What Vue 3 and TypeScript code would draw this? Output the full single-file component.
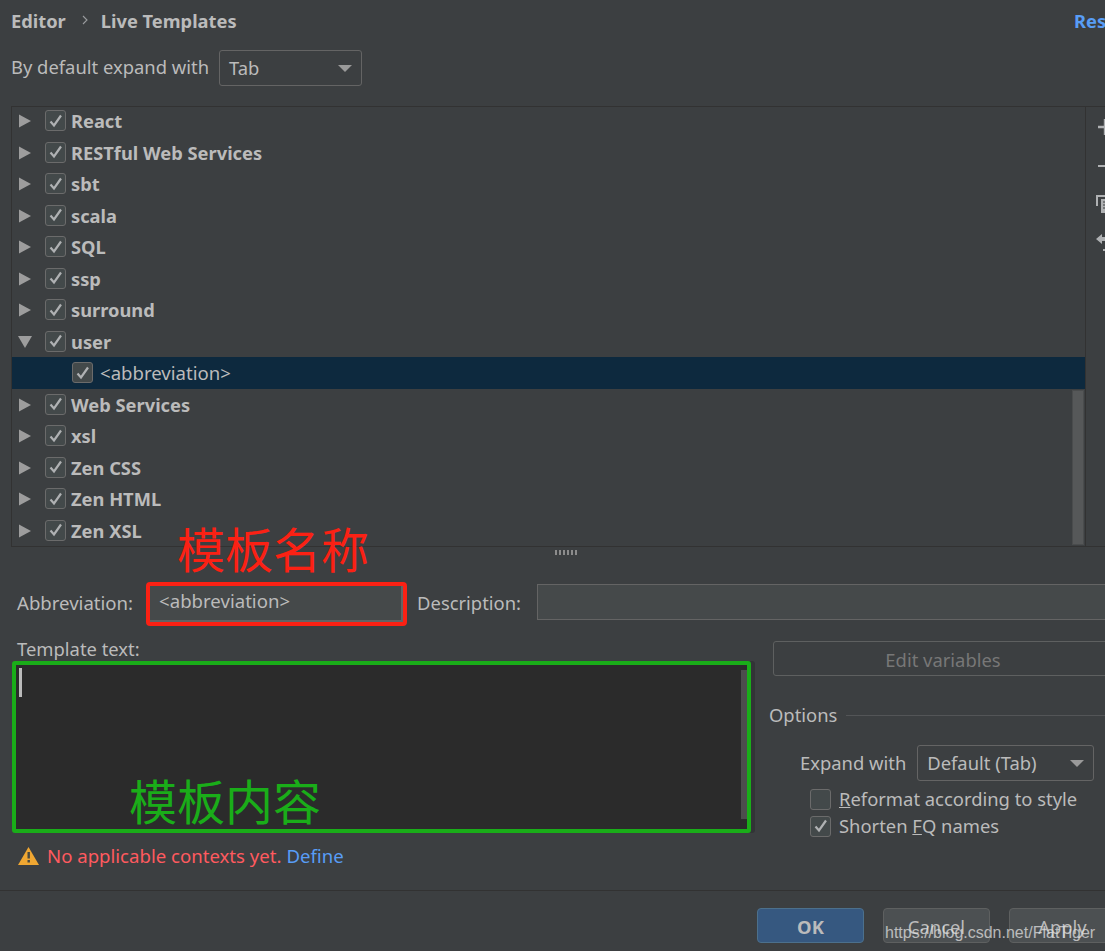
<template>
  <div class="page">
    <!-- Breadcrumb -->
    <div class="crumbs">
      <span>Editor</span>
      <svg class="crumb-arrow" width="8" height="12" viewBox="0 0 8 12"><path d="M2 2l4 4-4 4" fill="none" stroke="#9a9c9e" stroke-width="1.1"/></svg>
      <span>Live Templates</span>
      <a class="reset">Reset</a>
    </div>

    <div class="expand-row">
      <span class="expand-label">By default expand with</span>
      <div class="combo combo-tab"><span>Tab</span><i class="caret"></i></div>
    </div>

    <!-- Template groups -->
    <div class="tree-panel">
      <div class="tree">
        <div v-for="row in rows" :key="row.label" class="tree-row" :class="{ selected: row.child, bold: !row.child }">
          <svg v-if="!row.child && !row.open" class="arrow" width="14" height="16" viewBox="0 0 14 16"><path d="M1 1.5l12 6.5-12 6.5z" fill="#9d9d9d"/></svg>
          <svg v-else-if="row.open" class="arrow" width="14" height="16" viewBox="0 0 14 16"><path d="M0 2h14l-7 12z" fill="#9d9d9d"/></svg>
          <span class="check" :class="{ nested: row.child }">
            <svg width="14" height="14" viewBox="0 0 14 14"><path d="M1.5 7.5l3.5 4 7-10" fill="none" stroke="#afb1b3" stroke-width="2.2"/></svg>
          </span>
          <span class="tree-label">{{ row.label }}</span>
        </div>
        <div class="scroll-thumb"></div>
      </div>
      <div class="toolbar">
        <svg width="20" height="20" viewBox="0 0 20 20"><path d="M2 10h16M9 2v16" stroke="#afb1b3" stroke-width="2.4"/></svg>
        <svg width="20" height="20" viewBox="0 0 20 20"><path d="M2 10h16" stroke="#afb1b3" stroke-width="2"/></svg>
        <svg width="20" height="20" viewBox="0 0 20 20"><path d="M1 12V2h12" fill="none" stroke="#afb1b3" stroke-width="2"/><path d="M5 5h14v14H5z" fill="#afb1b3"/><path d="M7 8h10M7 11h10M7 14h10" stroke="#3c3f41"/></svg>
        <svg width="20" height="20" viewBox="0 0 20 20"><path d="M0 6l6-5v3h12v4H6v3z" fill="#afb1b3"/><path d="M7 17h11" stroke="#afb1b3" stroke-width="2"/></svg>
      </div>
    </div>

    <div class="splitter"><span class="grip"></span></div>

    <div class="fields-row">
      <label class="field-label abbr-label">Abbreviation:</label>
      <div class="abbr-frame"><div class="abbr-input">&lt;abbreviation&gt;</div></div>
      <label class="field-label desc-label">Description:</label>
      <div class="desc-input"></div>
    </div>

    <div class="editor-row">
      <div class="editor-col">
        <div class="template-label">Template text:</div>
        <div class="template-box">
          <i class="cursor"></i>
          <i class="editor-scroll"></i>
        </div>
      </div>
      <div class="side-col">
        <div class="edit-vars">Edit variables</div>
        <div class="options-title"><span>Options</span><i></i></div>
        <div class="expand-with">
          <span>Expand with</span>
          <div class="combo combo-default"><span>Default (Tab)</span><i class="caret"></i></div>
        </div>
        <div class="option">
          <span class="check"></span>
          <span><u>R</u>eformat according to style</span>
        </div>
        <div class="option">
          <span class="check">
            <svg width="14" height="14" viewBox="0 0 14 14"><path d="M1.5 7.5l3.5 4 7-10" fill="none" stroke="#afb1b3" stroke-width="2.2"/></svg>
          </span>
          <span>Shorten <u>F</u>Q names</span>
        </div>
      </div>
    </div>

    <div class="warning-row">
      <svg width="21" height="18" viewBox="0 0 21 18"><path d="M10.5 0L21 18H0z" fill="#f0a732"/><path d="M9.5 5h2.4v6.5H9.5zM9.5 13h2.4v2.5H9.5z" fill="#4a4a40"/></svg>
      <span class="warn-text">No applicable contexts yet.</span>
      <a class="define">Define</a>
    </div>

    <div class="footer">
      <div class="btn primary">OK</div>
      <div class="btn">Cancel</div>
      <div class="btn">Apply</div>
    </div>

    <!-- Annotations and watermark drawn over the dialog -->
    <div class="note note-red">模板名称</div>
    <div class="note note-green">模板内容</div>
    <div class="watermark">https://blog.csdn.net/FlatTiger</div>
  </div>
</template>

<script setup lang="ts">
interface TreeRow {
  label: string;
  open?: boolean;
  child?: boolean;
}

const rows: TreeRow[] = [
  { label: 'React' },
  { label: 'RESTful Web Services' },
  { label: 'sbt' },
  { label: 'scala' },
  { label: 'SQL' },
  { label: 'ssp' },
  { label: 'surround' },
  { label: 'user', open: true },
  { label: '<abbreviation>', child: true },
  { label: 'Web Services' },
  { label: 'xsl' },
  { label: 'Zen CSS' },
  { label: 'Zen HTML' },
  { label: 'Zen XSL' },
];
</script>

<style>
html, body { margin: 0; background: #3c3f41; }
</style>

<style scoped>
.page {
  position: relative;
  width: 1105px;
  height: 951px;
  overflow: hidden;
  display: flex;
  flex-direction: column;
  background: #3c3f41;
  color: #bbbbbb;
  font-family: "Noto Sans", "Noto Sans CJK SC", sans-serif;
  font-size: 18.4px;
}

.crumbs {
  height: 40px;
  flex: none;
  display: flex;
  align-items: center;
  padding: 0 0 2px 11px;
  box-sizing: content-box;
  font-size: 18.3px;
  font-weight: 700;
  white-space: nowrap;
}
.crumb-arrow { margin: 0 12px 0 15px; }
.reset { margin-left: auto; margin-right: -20px; color: #589df6; }

.expand-row {
  height: 64px;
  flex: none;
  box-sizing: border-box;
  padding: 8px 0 0 11px;
  display: flex;
  align-items: flex-start;
}
.expand-label { line-height: 34px; margin-right: 10px; }

.combo {
  box-sizing: border-box;
  height: 36px;
  display: flex;
  align-items: center;
  justify-content: space-between;
  padding: 0 9px 2px;
  border: 1px solid #646464;
  border-radius: 3px;
}
.combo-tab { width: 143px; }
.combo-default { width: 177px; }
.caret {
  width: 0;
  height: 0;
  margin-top: 2px;
  border-left: 7px solid transparent;
  border-right: 7px solid transparent;
  border-top: 7px solid #9a9a9a;
}

.tree-panel {
  flex: none;
  height: 441px;
  box-sizing: border-box;
  margin-left: 11px;
  display: flex;
  border: 1px solid #323232;
  border-right: none;
}
.tree {
  position: relative;
  width: 1073px;
  flex: none;
  border-right: 1px solid #323232;
}
.tree-row {
  position: relative;
  height: 31.5px;
  display: flex;
  align-items: center;
}
.tree-row:first-child { margin-top: -2px; }
.tree-row.bold { font-weight: 700; font-size: 18.3px; }
.tree-row.selected { background: #0d293e; font-size: 18.6px; }
.arrow { position: absolute; left: 6px; top: 8px; }
.check {
  box-sizing: border-box;
  width: 21px;
  height: 21px;
  flex: none;
  display: flex;
  align-items: center;
  justify-content: center;
  background: #43494a;
  border: 1px solid #6b6b6b;
  border-radius: 3px;
}
.tree-row .check { margin-left: 33px; }
.tree-row .check.nested { margin-left: 60px; }
.tree-label { margin-left: 5px; white-space: nowrap; }
.tree-row.selected .tree-label { margin-left: 7px; }
.scroll-thumb {
  position: absolute;
  right: 1px;
  top: 283px;
  bottom: 1px;
  width: 12px;
  background: #565859;
  border: 1px solid #4a4c4d;
  box-sizing: border-box;
}
.toolbar {
  flex: none;
  display: flex;
  flex-direction: column;
  align-items: flex-start;
  padding: 10px 0 0 10px;
  gap: 18.5px;
}

.splitter {
  height: 35px;
  flex: none;
  position: relative;
}
.grip {
  position: absolute;
  left: 555px;
  top: 3px;
  width: 23px;
  height: 5px;
  background: repeating-linear-gradient(90deg, #8c8c8c 0 2px, transparent 2px 4px);
}

.fields-row {
  height: 44px;
  flex: none;
  display: flex;
  align-items: center;
  padding-left: 17px;
  white-space: nowrap;
}
.field-label { line-height: 44px; margin-top: -2px; }
.abbr-label { font-size: 18.6px; }
.abbr-frame {
  box-sizing: border-box;
  width: 261px;
  height: 44px;
  margin-left: 13px;
  border: 4px solid #fb2114;
  border-radius: 4px;
  flex: none;
}
.abbr-input {
  box-sizing: border-box;
  height: 100%;
  padding-left: 9px;
  line-height: 30px;
  font-size: 18.6px;
  background: #45494a;
  border-right: 2px solid #646464;
  border-bottom: 2px solid #646464;
}
.desc-label { margin-left: 10px; }
.desc-input {
  box-sizing: border-box;
  width: 600px;
  height: 36px;
  margin: 0 0 5px 16px;
  background: #45494a;
  border: 1px solid #646464;
  flex: none;
}

.editor-row {
  height: 192px;
  flex: none;
  margin-top: 15px;
  display: flex;
  align-items: flex-start;
}
.editor-col {
  width: 739px;
  flex: none;
  margin-left: 12px;
}
.template-label {
  height: 20px;
  line-height: 16px;
  padding-left: 5px;
}
.template-box {
  position: relative;
  box-sizing: border-box;
  height: 172px;
  background: #2b2b2b;
  border: 4px solid #1aad19;
  border-radius: 3px;
  box-shadow: 4px 0 0 #323436;
}
.cursor {
  position: absolute;
  left: 3px;
  top: 3px;
  width: 3px;
  height: 29px;
  background: #bbbbbb;
}
.editor-scroll {
  position: absolute;
  right: 0;
  top: 5px;
  bottom: 10px;
  width: 6px;
  background: #4d4d4d;
}
.side-col {
  width: 400px;
  flex: none;
  margin-left: 18px;
  white-space: nowrap;
}
.edit-vars {
  box-sizing: border-box;
  width: 400px;
  height: 35px;
  margin-left: 4px;
  padding-right: 60px;
  line-height: 35px;
  text-align: center;
  color: #777777;
  border: 1px solid #5e6060;
  border-radius: 3px;
}
.options-title {
  height: 20px;
  margin-top: 30px;
  display: flex;
  align-items: center;
  line-height: 18px;
}
.options-title span { margin-top: -2px; }
.options-title i {
  flex: 1;
  height: 1px;
  margin-left: 9px;
  margin-top: -2px;
  background: #535557;
}
.expand-with {
  margin-top: 19px;
  margin-left: 31px;
  display: flex;
  align-items: center;
  gap: 11px;
}
.expand-with > span { margin-top: -2px; }
.option {
  margin-top: 8px;
  margin-left: 41px;
  height: 20px;
  display: flex;
  align-items: center;
  gap: 8px;
}
.option > span:last-child { margin-top: -2px; }
.option + .option { margin-top: 7px; }

.warning-row {
  height: 46px;
  flex: none;
  display: flex;
  align-items: center;
  padding-left: 18px;
  white-space: nowrap;
  font-size: 18.6px;
}
.warn-text { margin: -2px 0 0 8px; color: #ff5a5f; }
.define { margin: -2px 0 0 5px; color: #589df6; }

.footer {
  flex: none;
  margin-top: 11px;
  padding: 17px 0 0 757px;
  border-top: 1px solid #323232;
  display: flex;
  gap: 19px;
}
.btn {
  box-sizing: border-box;
  width: 107px;
  height: 35px;
  flex: none;
  line-height: 36px;
  text-align: center;
  background: #4c5052;
  border: 1px solid #5e6060;
  border-radius: 4px;
}
.btn.primary {
  background: #365880;
  border-color: #4c708c;
  font-weight: 700;
}

.note {
  position: absolute;
  font-size: 48px;
  line-height: 56px;
  white-space: nowrap;
  font-family: "Noto Sans CJK SC", sans-serif;
}
.note-red { left: 177px; top: 519px; color: #fb2114; }
.note-green { left: 129px; top: 771px; color: #1aad19; }
.watermark {
  position: absolute;
  left: 885px;
  top: 922px;
  font-family: "Liberation Sans", sans-serif;
  font-size: 16px;
  line-height: 22px;
  color: rgba(225, 225, 225, 0.75);
  white-space: nowrap;
}
</style>
